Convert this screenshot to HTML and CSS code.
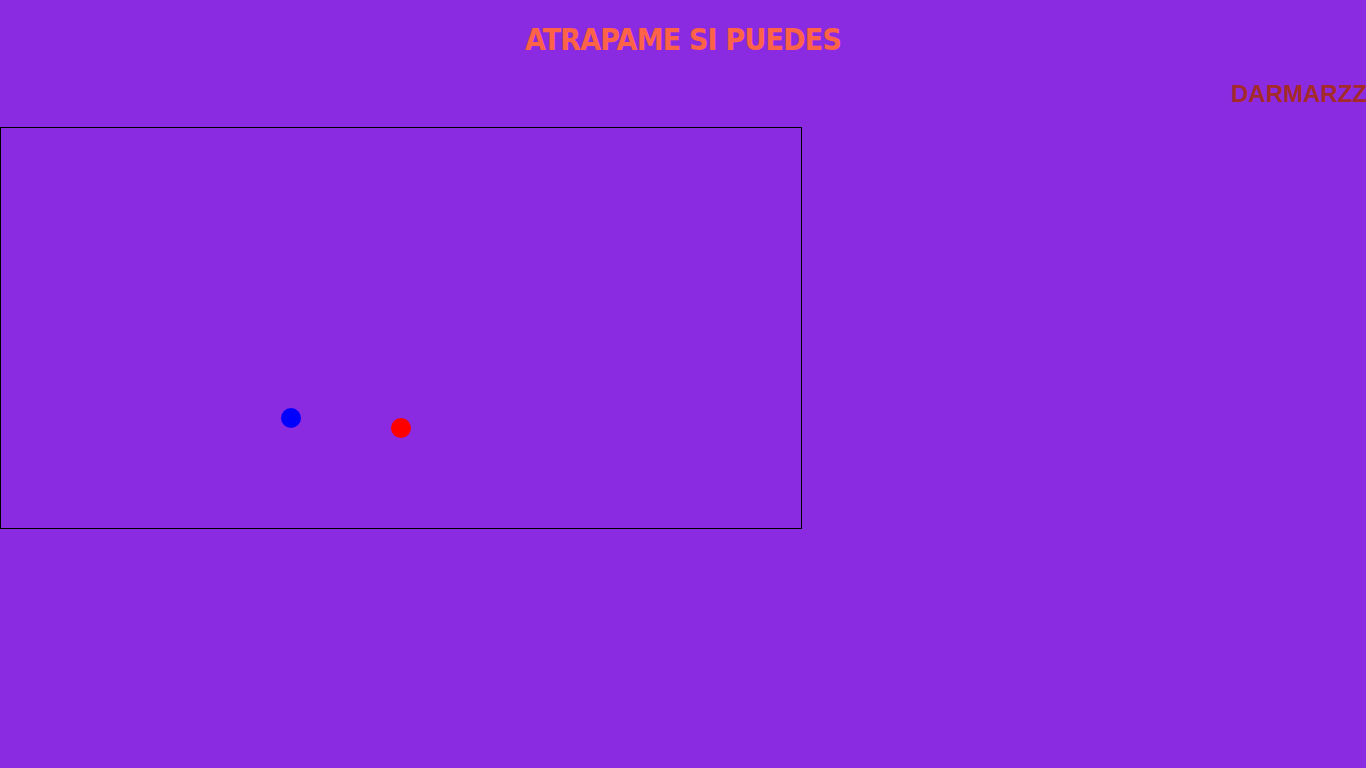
FILE: index.html
```html
<!DOCTYPE html>
<html lang="es">
<head>
<meta charset="utf-8">
<title>Atrapame si puedes</title>
<link rel="stylesheet" href="styles.css">
</head>
<body>
<header class="header">
  <h1 class="title">ATRAPAME SI PUEDES</h1>
  <h2 class="author">DARMARZZ</h2>
</header>
<div class="board">
  <span class="dot dot-blue" style="left:280px;top:280px"></span>
  <span class="dot dot-red" style="left:390px;top:290px"></span>
</div>
</body>
</html>
```

FILE: styles.css
```css
html, body {
  margin: 0;
  padding: 0;
  background: #8a2be2;
}
body {
  font-family: "Liberation Sans", Arial, sans-serif;
  height: 768px;
  overflow: hidden;
}
.header {
  display: flex;
  flex-direction: column;
  height: 127px;
}
.title {
  margin: 0;
  padding-top: 20px;
  height: 40px;
  line-height: 40px;
  text-align: center;
  color: #ff6347;
  font-family: "DejaVu Sans Condensed", "Liberation Sans Narrow", sans-serif;
  font-weight: bold;
  font-size: 30px;
  letter-spacing: -0.8px;
}
.author {
  margin: 0;
  margin-top: 19px;
  height: 30px;
  line-height: 30px;
  text-align: right;
  color: #a52a2a;
  font-size: 24px;
  font-weight: bold;
  margin-right: -1px;
}
.board {
  position: relative;
  width: 800px;
  height: 400px;
  border: 1px solid #000;
}
.dot {
  position: absolute;
  width: 20px;
  height: 20px;
  border-radius: 50%;
}
.dot-blue { background: #0000ff; }
.dot-red { background: #ff0000; }
```
